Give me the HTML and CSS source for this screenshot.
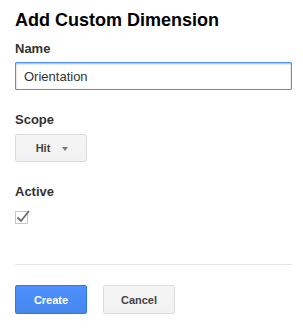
FILE: index.html
```html
<!DOCTYPE html>
<html lang="en">
<head>
    <meta charset="UTF-8">
    <meta name="viewport" content="width=device-width, initial-scale=1.0">
    <title>Add Custom Dimension</title>
    <link rel="stylesheet" href="styles.css">
</head>
<body>

<div class="dialog">
    <h1 class="dialog-title">Add Custom Dimension</h1>

    <!-- Name -->
    <div class="field">
        <label class="field-label" for="dimName">Name</label>
        <input type="text" id="dimName" class="text-input" value="Orientation">
    </div>

    <!-- Scope -->
    <div class="field">
        <div class="field-label">Scope</div>
        <button class="btn btn-menu" type="button">
            <span>Hit</span>
            <span class="menu-arrow"></span>
        </button>
    </div>

    <!-- Active -->
    <div class="field">
        <div class="field-label">Active</div>
        <span class="checkbox">
            <svg width="16" height="15" viewBox="0 0 16 15">
                <path d="M2.5 8.5 L6 12 L14 2" fill="none" stroke="#6b6b6b" stroke-width="1.8"/>
            </svg>
        </span>
    </div>

    <div class="divider"></div>

    <div class="actions">
        <button class="btn btn-action" type="button">Create</button>
        <button class="btn" type="button">Cancel</button>
    </div>
</div>

</body>
</html>
```

FILE: styles.css
```css
body {
    margin: 0;
    padding: 0;
    background: #fff;
    font-family: 'Liberation Sans', Arial, sans-serif;
    color: #222;
}
.dialog {
    padding: 10px 11px 0 15px;
}
.dialog-title {
    margin: 0 0 11px;
    font-size: 18px;
    line-height: 20px;
    font-weight: bold;
    color: #000;
}
.field {
    margin-bottom: 22px;
}
.field-label {
    display: block;
    font-size: 13px;
    line-height: 15px;
    font-weight: bold;
    color: #333;
    margin-bottom: 6px;
}
.text-input {
    box-sizing: border-box;
    display: block;
    width: 100%;
    height: 28px;
    margin: 0;
    padding: 0 8px;
    border: 1px solid #4d90fe;
    border-radius: 1px;
    box-shadow: inset 0 1px 2px rgba(0, 0, 0, 0.3);
    font-family: 'Liberation Sans', Arial, sans-serif;
    font-size: 13px;
    color: #333;
    outline: none;
}
.btn {
    box-sizing: border-box;
    display: inline-flex;
    align-items: center;
    justify-content: center;
    width: 72px;
    height: 29px;
    margin: 0;
    padding: 0 8px;
    border: 1px solid #dcdcdc;
    border-radius: 2px;
    background: linear-gradient(#f5f5f5, #f1f1f1);
    font-family: 'Liberation Sans', Arial, sans-serif;
    font-size: 11px;
    font-weight: bold;
    color: #444;
    cursor: pointer;
}
.btn-menu {
    height: 28px;
    margin-top: 1px;
    gap: 12px;
    padding-left: 10px;
}
.menu-arrow {
    width: 0;
    height: 0;
    margin-top: 1px;
    border-left: 3.5px solid transparent;
    border-right: 3.5px solid transparent;
    border-top: 4px solid #777;
}
.checkbox {
    box-sizing: border-box;
    display: block;
    position: relative;
    width: 13px;
    height: 13px;
    margin-top: 12px;
    border: 1px solid #c6c6c6;
    background: #fff;
}
.checkbox svg {
    position: absolute;
    left: -1px;
    top: -3px;
}
.divider {
    height: 1px;
    margin-top: 40px;
    background: #e5e5e5;
}
.actions {
    display: flex;
    gap: 16px;
    margin-top: 20px;
}
.btn-action {
    border-color: #3079ed;
    background: linear-gradient(#4d90fe, #4787ed);
    color: #fff;
}
```
